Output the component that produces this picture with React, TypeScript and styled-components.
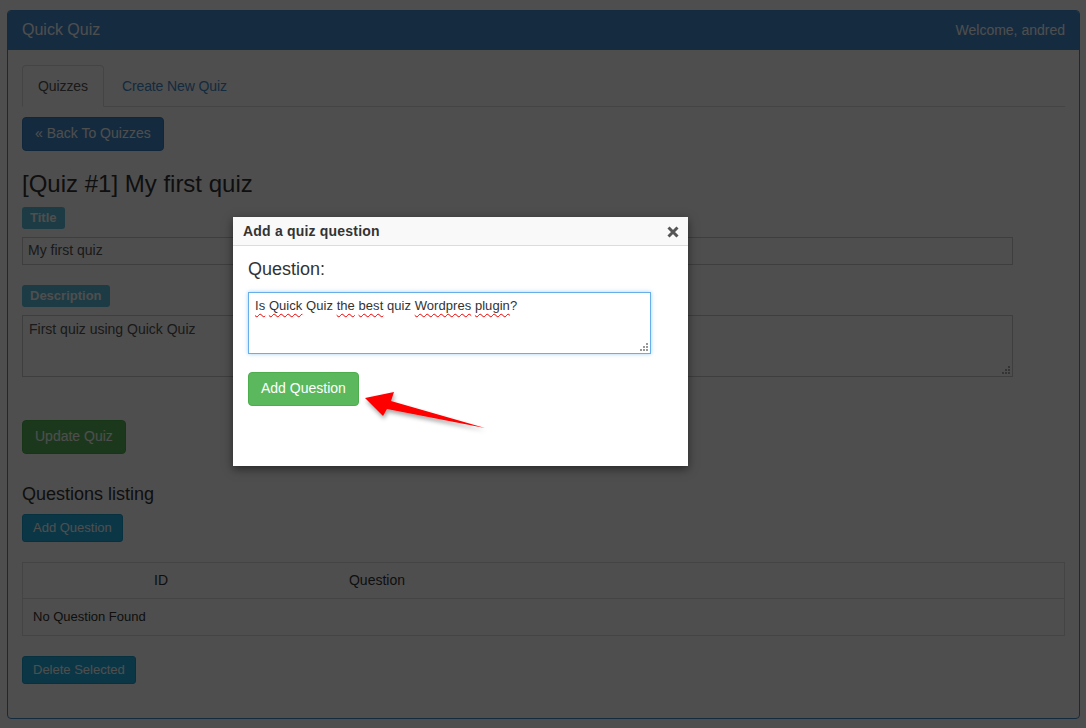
import React from "react";
import styled, { createGlobalStyle } from "styled-components";

const Global = createGlobalStyle`
  html, body { margin: 0; padding: 0; background: #fff; }
  body {
    font-family: "Liberation Sans", Arial, Helvetica, sans-serif;
    font-size: 14px;
    line-height: 1.428571;
    color: #333;
    width: 1086px;
    height: 728px;
    overflow: hidden;
  }
  * { box-sizing: border-box; }
`;

const Page = styled.div`
  position: relative;
  width: 1086px;
  height: 728px;
  padding: 10px 6px 0 7px;
`;

const Panel = styled.div`
  border: 1px solid #428bca;
  border-radius: 4px;
  height: 709px;
  display: flex;
  flex-direction: column;
`;

const PanelHeading = styled.div`
  height: 39px;
  background: #458cd1;
  color: #fff;
  display: flex;
  align-items: center;
  justify-content: space-between;
  padding: 0 14px 0 14px;
  border-radius: 3px 3px 0 0;
`;

const Brand = styled.span`
  font-size: 16px;
`;

const Welcome = styled.span`
  font-size: 14px;
`;

const PanelBody = styled.div`
  padding: 15px 14px 15px 14px;
  display: flex;
  flex-direction: column;
  align-items: flex-start;
`;

const Tabs = styled.div`
  align-self: stretch;
  display: flex;
  border-bottom: 1px solid #ddd;
  height: 42px;
`;

const Tab = styled.div<{ $active?: boolean }>`
  height: 42px;
  padding: 10px 15px;
  line-height: 20px;
  margin-right: 2px;
  border: 1px solid ${(p) => (p.$active ? "#ddd" : "transparent")};
  border-bottom-color: ${(p) => (p.$active ? "#fff" : "transparent")};
  border-radius: 4px 4px 0 0;
  background: ${(p) => (p.$active ? "#fff" : "transparent")};
  color: ${(p) => (p.$active ? "#555" : "#428bca")};
  font-size: 14px;
  letter-spacing: -0.1px;
`;

const Button = styled.div<{ $variant: "primary" | "success" | "info"; $small?: boolean }>`
  display: inline-flex;
  align-items: center;
  justify-content: center;
  height: ${(p) => (p.$small ? "28px" : "34px")};
  padding: ${(p) => (p.$small ? "0 10px" : "0 12px")};
  font-size: ${(p) => (p.$small ? "13px" : "14px")};
  border-radius: ${(p) => (p.$small ? "3px" : "4px")};
  color: #fff;
  background: ${(p) =>
    p.$variant === "primary" ? "#428bca" : p.$variant === "success" ? "#5cb85c" : "#26b0e2"};
  border: 1px solid
    ${(p) =>
      p.$variant === "primary" ? "#357ebd" : p.$variant === "success" ? "#4cae4c" : "#1a9fcf"};
  white-space: nowrap;
`;

const Title = styled.h3`
  font-size: 24px;
  font-weight: 500;
  line-height: 26px;
  margin: 20px 0 10px;
  color: #333;
`;

const SubTitle = styled.h4`
  font-size: 18px;
  font-weight: 500;
  line-height: 20px;
  margin: 30px 0 10px;
  color: #333;
`;

const Label = styled.span`
  display: inline-block;
  background: #5bc0de;
  color: #fff;
  font-weight: bold;
  font-size: 13px;
  line-height: 16px;
  padding: 3px 8px;
  border-radius: 3px;
`;

const Field = styled.div<{ $h: number }>`
  align-self: stretch;
  margin: 8px 52px 0 0;
  height: ${(p) => p.$h}px;
  border: 1px solid #ccc;
  padding: ${(p) => (p.$h > 40 ? "4px 6px" : "0 5px")};
  display: flex;
  align-items: ${(p) => (p.$h > 40 ? "flex-start" : "center")};
  font-size: 14px;
  color: #555;
  position: relative;
  background: #fff;
`;

const Gap = styled.div<{ $h: number }>`
  height: ${(p) => p.$h}px;
  flex: none;
`;

const Table = styled.div`
  align-self: stretch;
  margin-top: 20px;
  border: 1px solid #ddd;
  display: flex;
  flex-direction: column;
`;

const HeadRow = styled.div`
  display: flex;
  height: 36px;
  align-items: center;
  border-bottom: 1px solid #ddd;
  font-size: 14px;
`;

const HeadCell = styled.div<{ $w: number }>`
  width: ${(p) => p.$w}px;
  text-align: center;
`;

const BodyRow = styled.div`
  height: 36px;
  display: flex;
  align-items: center;
  padding-left: 10px;
  font-size: 13px;
`;

const Grip = styled.svg`
  position: absolute;
  right: 2px;
  bottom: 2px;
`;

const Overlay = styled.div`
  position: absolute;
  inset: 0;
  background: rgba(0, 0, 0, 0.695);
`;

const Modal = styled.div`
  position: absolute;
  left: 233px;
  top: 217px;
  width: 455px;
  height: 249px;
  background: #fff;
  box-shadow: 0 3px 9px rgba(0, 0, 0, 0.5);
  display: flex;
  flex-direction: column;
`;

const ModalHeader = styled.div`
  height: 29px;
  background: #f9f9f9;
  border-bottom: 1px solid #dcdcdc;
  display: flex;
  align-items: center;
  justify-content: space-between;
  padding: 1px 9px 0 10px;
`;

const ModalTitle = styled.span`
  font-weight: bold;
  font-size: 14px;
  color: #333;
  letter-spacing: 0.2px;
`;

const ModalBody = styled.div`
  padding: 12px 15px;
  display: flex;
  flex-direction: column;
  align-items: flex-start;
`;

const QuestionLabel = styled.div`
  font-size: 18px;
  line-height: 22px;
  color: #333;
`;

const QuestionBox = styled.div`
  margin-top: 12px;
  width: 403px;
  height: 62px;
  border: 1px solid #66afe9;
  box-shadow: 0 0 4px rgba(102, 175, 233, 0.6);
  padding: 4px 6px;
  font-size: 13px;
  line-height: 18px;
  color: #333;
  position: relative;
  letter-spacing: 0.05px;
`;

const Typo = styled.span`
  text-decoration: underline wavy #e00;
  text-decoration-thickness: 1px;
  text-underline-offset: 3px;
`;

const Arrow = styled.svg`
  position: absolute;
  left: 355px;
  top: 385px;
  overflow: visible;
`;

const GripDots = ({ color }: { color: string }) => (
  <Grip width="8" height="8" viewBox="0 0 8 8">
    <g fill={color}>
      <rect x="6" y="0" width="2" height="2" />
      <rect x="3" y="3" width="2" height="2" />
      <rect x="6" y="3" width="2" height="2" />
      <rect x="0" y="6" width="2" height="2" />
      <rect x="3" y="6" width="2" height="2" />
      <rect x="6" y="6" width="2" height="2" />
    </g>
  </Grip>
);

export default function App() {
  return (
    <>
      <Global />
      <Page>
        <Panel>
          <PanelHeading>
            <Brand>Quick Quiz</Brand>
            <Welcome>Welcome, andred</Welcome>
          </PanelHeading>
          <PanelBody>
            <Tabs>
              <Tab $active>Quizzes</Tab>
              <Tab>Create New Quiz</Tab>
            </Tabs>
            <Gap $h={10} />
            <Button $variant="primary">« Back To Quizzes</Button>
            <Title>[Quiz #1] My first quiz</Title>
            <Label>Title</Label>
            <Field $h={28}>My first quiz</Field>
            <Gap $h={20} />
            <Label>Description</Label>
            <Field $h={62}>
              First quiz using Quick Quiz
              <GripDots color="#aaa" />
            </Field>
            <Gap $h={43} />
            <Button $variant="success">Update Quiz</Button>
            <SubTitle>Questions listing</SubTitle>
            <Button $variant="info" $small>
              Add Question
            </Button>
            <Table>
              <HeadRow>
                <HeadCell $w={276}>ID</HeadCell>
                <HeadCell $w={156}>Question</HeadCell>
              </HeadRow>
              <BodyRow>No Question Found</BodyRow>
            </Table>
            <Gap $h={20} />
            <Button $variant="info" $small>
              Delete Selected
            </Button>
          </PanelBody>
        </Panel>
        <Overlay />
        <Modal>
          <ModalHeader>
            <ModalTitle>Add a quiz question</ModalTitle>
            <svg width="12" height="12" viewBox="0 0 12 12">
              <path d="M1.5 1.5 L10.5 10.5 M10.5 1.5 L1.5 10.5" stroke="#555" strokeWidth="3" strokeLinecap="butt" />
            </svg>
          </ModalHeader>
          <ModalBody>
            <QuestionLabel>Question:</QuestionLabel>
            <QuestionBox>
              <Typo>Is</Typo> <Typo>Quick</Typo> Quiz <Typo>the</Typo> <Typo>best</Typo> quiz{" "}
              <Typo>Wordpres</Typo> <Typo>plugin</Typo>?
              <GripDots color="#999" />
            </QuestionBox>
            <Gap $h={18} />
            <Button $variant="success">Add Question</Button>
          </ModalBody>
        </Modal>
        <Arrow width="140" height="60" viewBox="355 385 140 60">
          <defs>
            <filter id="sh" x="-20%" y="-50%" width="140%" height="200%">
              <feDropShadow dx="1" dy="3" stdDeviation="2" floodColor="#000" floodOpacity="0.35" />
            </filter>
          </defs>
          <polygon
            points="365,398 394,392 391,401 485,428 387,409 383,416"
            fill="#ff0000"
            filter="url(#sh)"
          />
        </Arrow>
      </Page>
    </>
  );
}
